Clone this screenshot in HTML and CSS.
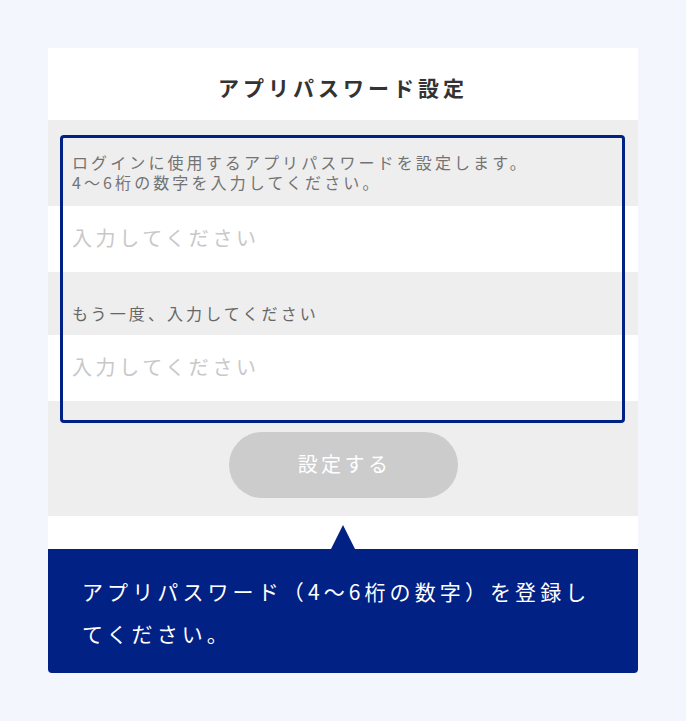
FILE: index.html
```html
<!DOCTYPE html>
<html lang="ja">
<head>
<meta charset="utf-8">
<title>アプリパスワード設定</title>
<link rel="stylesheet" href="styles.css">
</head>
<body>
<div class="card">
  <div class="header"><h1 class="title">アプリパスワード設定</h1></div>
  <div class="form">
    <p class="desc">ログインに使用するアプリパスワードを設定します。<br>4〜6桁の数字を入力してください。</p>
    <div class="field"><input class="input" type="password" placeholder="入力してください"></div>
    <p class="label">もう一度、入力してください</p>
    <div class="field"><input class="input" type="password" placeholder="入力してください"></div>
    <div class="actions"><button class="btn" type="button">設定する</button></div>
    <div class="highlight"></div>
  </div>
  <div class="gap"></div>
  <div class="callout">アプリパスワード（4〜6桁の数字）を登録してください。</div>
</div>
</body>
</html>
```

FILE: styles.css
```css
html, body {
  margin: 0;
  padding: 0;
  background: #f3f6fd;
  font-family: "Noto Sans CJK JP", "Noto Sans", sans-serif;
}
.card {
  width: 590px;
  margin: 48px auto 0;
}
.header {
  height: 72px;
  background: #ffffff;
  display: flex;
  align-items: center;
  justify-content: center;
}
.title {
  margin: 6px 0 0;
  font-size: 21px;
  font-weight: 700;
  letter-spacing: 4px;
  color: #333333;
  line-height: 30px;
}
.form {
  position: relative;
  background: #eeeeee;
}
.desc {
  margin: 0;
  padding: 32px 20px 14px 24px;
  font-size: 16px;
  line-height: 20px;
  letter-spacing: 3.1px;
  color: #737373;
}
.field {
  height: 66px;
  background: #ffffff;
  display: flex;
  align-items: center;
}
.input {
  width: 100%;
  height: 66px;
  box-sizing: border-box;
  border: 0;
  outline: none;
  background: transparent;
  padding: 0 24px 3px;
  font-family: inherit;
  font-size: 20px;
  letter-spacing: 3.6px;
  color: #333333;
}
.input::placeholder {
  color: #c8c8c8;
  opacity: 1;
}
.label {
  margin: 0;
  padding: 31px 20px 12px 24px;
  font-size: 16px;
  line-height: 20px;
  letter-spacing: 3.1px;
  color: #666666;
}
.actions {
  display: flex;
  justify-content: center;
  padding: 31px 0 18px;
}
.btn {
  width: 229px;
  height: 66px;
  border: 0;
  border-radius: 33px;
  background: #cccccc;
  color: #ffffff;
  font-family: inherit;
  font-size: 20px;
  letter-spacing: 3.4px;
  padding: 0 0 4px 3px;
}
.highlight {
  position: absolute;
  left: 12px;
  top: 15px;
  width: 559px;
  height: 282px;
  border: 3px solid #012185;
  border-radius: 4px;
  pointer-events: none;
}
.gap {
  height: 33px;
  background: #ffffff;
}
.callout {
  position: relative;
  background: #012185;
  color: #ffffff;
  border-radius: 0 0 4px 4px;
  padding: 21px 36px 19px 34px;
  font-size: 21px;
  line-height: 42px;
  letter-spacing: 4.1px;
}
.callout::before {
  content: "";
  position: absolute;
  top: -24px;
  left: 50%;
  margin-left: -12px;
  border-left: 12px solid transparent;
  border-right: 12px solid transparent;
  border-bottom: 24px solid #012185;
}
```
